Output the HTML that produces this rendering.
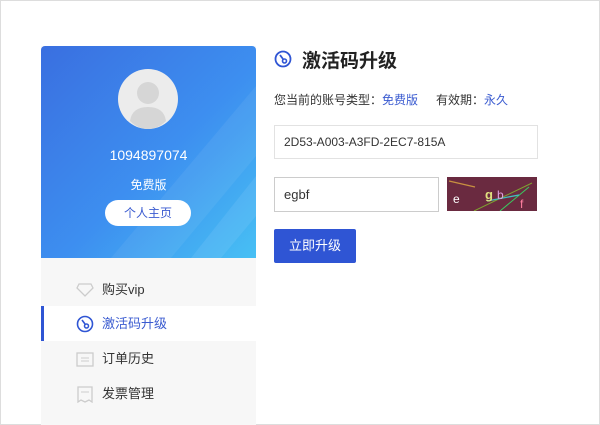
<!DOCTYPE html><html><head><meta charset="utf-8"><style>
body{margin:0;width:600px;height:425px;background:#fff;font-family:"Liberation Sans","Noto Sans CJK SC",sans-serif;position:relative;overflow:hidden}
.frame{position:absolute;left:0;top:0;width:598px;height:423px;border:1px solid #ddd}
.a{position:absolute}
.side{left:41px;top:46px;width:215px;height:379px;background:#f7f7f7}
.hd{left:41px;top:46px;width:215px;height:212px;background:linear-gradient(135deg,#3a6fe0 0%,#3d8ff0 55%,#47c0f4 100%);border-radius:4px 4px 0 0;overflow:hidden}
.mi{left:41px;width:215px;height:35px;font-size:13px;color:#333;line-height:35px}
.mi span{position:absolute;left:61px}
</style></head><body>
<div class="frame"></div>
<div class="a side"></div>
<div class="a hd">
<svg class="a" style="left:0;top:0" width="215" height="212"><polygon points="130,212 215,110 215,40 70,212" fill="rgba(255,255,255,0.06)"/><polygon points="180,212 215,170 215,130 150,212" fill="rgba(255,255,255,0.08)"/></svg>
<svg class="a" style="left:77px;top:23px" width="60" height="60"><circle cx="30" cy="30" r="30" fill="#ececec"/><circle cx="30" cy="24" r="11" fill="#d6d6d6"/><path d="M12,52 Q14,38 30,38 Q46,38 48,52 Q40,60 30,60 Q20,60 12,52Z" fill="#d6d6d6"/></svg>
<div class="a" style="left:0;width:215px;top:101px;text-align:center;color:#fff;font-size:14px">1094897074</div>
<div class="a" style="left:0;width:215px;top:130px;text-align:center;color:#fff;font-size:12px">免费版</div>
<div class="a" style="left:64px;top:154px;width:86px;height:26px;border-radius:13px;background:#fff;color:#3a5bd0;font-size:12px;text-align:center;line-height:26px">个人主页</div>
</div>
<div class="a mi" style="top:272px"><svg class="a" style="left:35px;top:10px" width="18" height="16"><path d="M3,2 H15 L17,6 L9,14 L1,6Z" fill="none" stroke="#ccc" stroke-width="1.3"/></svg><span>购买vip</span></div>
<div class="a mi" style="top:306px;background:#fff"><div class="a" style="left:0;top:0;width:3px;height:35px;background:#2f55d4"></div><svg class="a" style="left:35px;top:9px" width="18" height="18"><circle cx="9" cy="9" r="7.5" fill="none" stroke="#2f55d4" stroke-width="1.6"/><path d="M6,5 L9,9" stroke="#2f55d4" stroke-width="1.6"/><circle cx="10.5" cy="11" r="2" fill="none" stroke="#2f55d4" stroke-width="1.5"/></svg><span style="color:#3a5bd0">激活码升级</span></div>
<div class="a mi" style="top:341px"><svg class="a" style="left:35px;top:10px" width="18" height="16"><rect x="1" y="2" width="16" height="13" fill="none" stroke="#ccc" stroke-width="1.3"/><path d="M5,7H13M5,10H13" stroke="#ccc"/></svg><span>订单历史</span></div>
<div class="a mi" style="top:376px"><svg class="a" style="left:35px;top:10px" width="18" height="17"><path d="M2,1H16V16L13,14L9,16L5,14L2,16Z" fill="none" stroke="#ccc" stroke-width="1.3"/><path d="M5,6H13" stroke="#ccc"/></svg><span>发票管理</span></div>

<svg class="a" style="left:274px;top:50px" width="18" height="18"><circle cx="9" cy="9" r="7.5" fill="none" stroke="#2f55d4" stroke-width="1.8"/><path d="M6,5 L9,9" stroke="#2f55d4" stroke-width="1.8"/><circle cx="10.5" cy="11" r="2" fill="none" stroke="#2f55d4" stroke-width="1.6"/></svg>
<div class="a" style="left:302px;top:46px;font-size:19px;font-weight:bold;color:#222">激活码升级</div>
<div class="a" style="left:274px;top:91px;font-size:12px;color:#333">您当前的账号类型：<span style="color:#3a5bd0">免费版</span><span style="display:inline-block;width:18px"></span>有效期：<span style="color:#3a5bd0">永久</span></div>
<div class="a" style="left:274px;top:125px;width:262px;height:32px;border:1px solid #e2e2e2;font-size:12px;color:#333;line-height:32px;text-indent:9px">2D53-A003-A3FD-2EC7-815A</div>
<div class="a" style="left:274px;top:177px;width:163px;height:33px;border:1px solid #ccc;font-size:13px;color:#333;line-height:33px;text-indent:9px">egbf</div>
<svg class="a" style="left:447px;top:177px" width="90" height="34"><rect width="90" height="34" fill="#6a2a40"/><path d="M2,4 L28,10" stroke="#c89040" stroke-width="1.3"/><path d="M27,34 L85,6" stroke="#7fa030"/><path d="M53,34 L82,10" stroke="#3acb60"/><path d="M40,24 L72,18" stroke="#40c0c0" stroke-width="1.3"/><text x="6" y="26" font-size="12" fill="#fff" font-family="Liberation Sans">e</text><text x="38" y="22" font-size="13" fill="#e0e080" font-family="Liberation Sans" font-weight="bold">g</text><text x="50" y="22" font-size="12" fill="#e0a0e0" font-family="Liberation Sans">b</text><text x="73" y="31" font-size="12" fill="#ff80a0" font-family="Liberation Sans">f</text></svg>
<div class="a" style="left:274px;top:229px;width:82px;height:34px;background:#2f55d4;border-radius:2px;color:#fff;font-size:13px;text-align:center;line-height:34px">立即升级</div>
</body></html>
